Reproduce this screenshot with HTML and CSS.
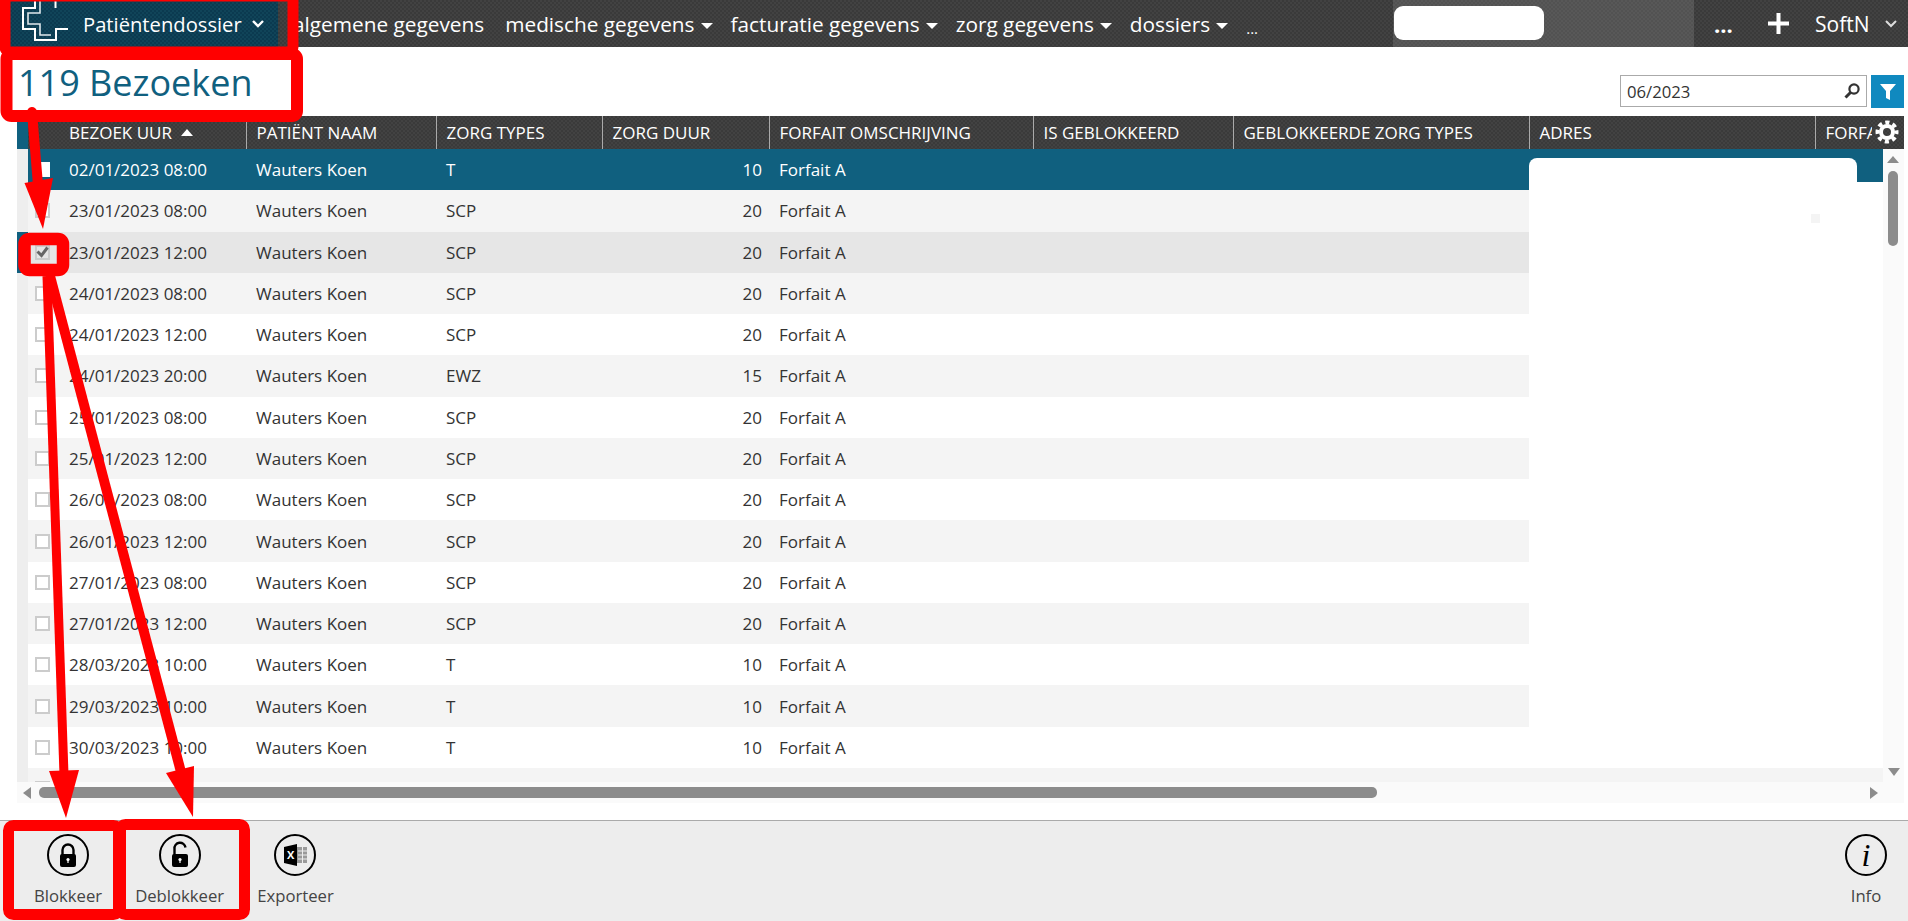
FILE: index.html
```html
<!DOCTYPE html>
<html lang="en">
<head>
    <meta charset="UTF-8">
    <title>119 Bezoeken</title>
    <link rel="stylesheet" href="styles.css">
</head>
<body>
    <header class="topbar">
        <div class="module">
            <svg class="logo" width="60" height="47" viewBox="0 0 60 47">
                <path d="M25 0v8H13v21h12v11h21V29h12" fill="none" stroke="#fff" stroke-width="2"/>
                <path d="M30 0v13H18v11h12v11h11" fill="none" stroke="#dfe8ec" stroke-width="1.6"/>
                <path d="M45.5 0v8" fill="none" stroke="#fff" stroke-width="2"/>
            </svg>
            <span class="module-name">Patiëntendossier</span>
            <svg class="chevron" width="12" height="8" viewBox="0 0 12 8"><path d="M1 1l5 5 5-5" fill="none" stroke="#fff" stroke-width="2.4"/></svg>
        </div>
        <nav class="menu">
            <a href="#" class="plain">algemene gegevens</a>
            <a href="#" class="drop">medische gegevens</a>
            <a href="#" class="drop">facturatie gegevens</a>
            <a href="#" class="drop">zorg gegevens</a>
            <a href="#" class="drop">dossiers</a>
            <a href="#" class="more">...</a>
        </nav>
        <div class="search-zone"><div class="search-box"></div></div>
        <div class="actions">
            <span class="dots">...</span>
            <svg width="21" height="21" viewBox="0 0 21 21"><path d="M10.5 0v21M0 10.5h21" stroke="#fff" stroke-width="4"/></svg>
            <span class="user">SoftN</span>
            <svg width="12" height="8" viewBox="0 0 12 8"><path d="M1 1l5 5 5-5" fill="none" stroke="#ddd" stroke-width="2"/></svg>
        </div>
    </header>

    <section class="title-row">
        <h1>119 Bezoeken</h1>
        <div class="filter">
            <div class="filter-input">
                <span>06/2023</span>
                <svg width="18" height="18" viewBox="0 0 18 18"><circle cx="11" cy="7" r="4.6" fill="none" stroke="#333" stroke-width="2.2"/><path d="M7.5 10.5L2.5 15.5" stroke="#333" stroke-width="3"/></svg>
            </div>
            <button class="filter-btn">
                <svg width="16" height="18" viewBox="0 0 16 18"><path d="M0 1h16L10 8v9l-4-2V8z" fill="#fff"/></svg>
            </button>
        </div>
    </section>

    <section class="grid">
        <table class="grid-head">
            <colgroup><col class="c-gutter"><col class="c-check"><col class="c-date"><col class="c-name"><col class="c-types"><col class="c-duur"><col class="c-forfait"><col class="c-blok"><col class="c-bloktypes"><col class="c-adres"><col class="c-last"></colgroup>
            <tr>
                <th class="gutter"></th>
                <th class="check-cell"></th>
                <th class="first">BEZOEK UUR <span class="sort"></span></th>
                <th>PATIËNT NAAM</th>
                <th>ZORG TYPES</th>
                <th>ZORG DUUR</th>
                <th>FORFAIT OMSCHRIJVING</th>
                <th>IS GEBLOKKEERD</th>
                <th>GEBLOKKEERDE ZORG TYPES</th>
                <th>ADRES</th>
                <th><span class="clip">FORFA</span></th>
            </tr>
        </table>
        <svg class="gear" width="24" height="24" viewBox="0 0 24 24">
            <circle cx="12" cy="12" r="9.5" fill="none" stroke="#fff" stroke-width="4" stroke-dasharray="4.1 3.36" stroke-dashoffset="2"/>
            <circle cx="12" cy="12" r="6" fill="none" stroke="#fff" stroke-width="4"/>
        </svg>
        <div class="grid-middle">
            <div class="grid-body">
                <table class="rows">
                    <colgroup><col class="c-gutter"><col class="c-check"><col class="c-date"><col class="c-name"><col class="c-types"><col class="c-duur"><col class="c-forfait"><col class="c-blok"><col class="c-bloktypes"><col class="c-adres"><col class="c-last2"></colgroup>
                    <tr class="current"><td class="gutter"></td><td class="check-cell"><span class="box"></span></td><td class="first">02/01/2023 08:00</td><td>Wauters Koen</td><td>T</td><td class="num">10</td><td>Forfait A</td><td></td><td></td><td></td><td></td></tr>
                    <tr class="alt"><td class="gutter"></td><td class="check-cell"><span class="box"></span></td><td class="first">23/01/2023 08:00</td><td>Wauters Koen</td><td>SCP</td><td class="num">20</td><td>Forfait A</td><td></td><td></td><td></td><td></td></tr>
                    <tr class="checked"><td class="gutter"></td><td class="check-cell"><span class="box"><svg width="15" height="15" viewBox="0 0 15 15"><path d="M2.5 6.5l4 4 6-8" fill="none" stroke="#666" stroke-width="3"/></svg></span></td><td class="first">23/01/2023 12:00</td><td>Wauters Koen</td><td>SCP</td><td class="num">20</td><td>Forfait A</td><td></td><td></td><td></td><td></td></tr>
                    <tr class="alt"><td class="gutter"></td><td class="check-cell"><span class="box"></span></td><td class="first">24/01/2023 08:00</td><td>Wauters Koen</td><td>SCP</td><td class="num">20</td><td>Forfait A</td><td></td><td></td><td></td><td></td></tr>
                    <tr><td class="gutter"></td><td class="check-cell"><span class="box"></span></td><td class="first">24/01/2023 12:00</td><td>Wauters Koen</td><td>SCP</td><td class="num">20</td><td>Forfait A</td><td></td><td></td><td></td><td></td></tr>
                    <tr class="alt"><td class="gutter"></td><td class="check-cell"><span class="box"></span></td><td class="first">24/01/2023 20:00</td><td>Wauters Koen</td><td>EWZ</td><td class="num">15</td><td>Forfait A</td><td></td><td></td><td></td><td></td></tr>
                    <tr><td class="gutter"></td><td class="check-cell"><span class="box"></span></td><td class="first">25/01/2023 08:00</td><td>Wauters Koen</td><td>SCP</td><td class="num">20</td><td>Forfait A</td><td></td><td></td><td></td><td></td></tr>
                    <tr class="alt"><td class="gutter"></td><td class="check-cell"><span class="box"></span></td><td class="first">25/01/2023 12:00</td><td>Wauters Koen</td><td>SCP</td><td class="num">20</td><td>Forfait A</td><td></td><td></td><td></td><td></td></tr>
                    <tr><td class="gutter"></td><td class="check-cell"><span class="box"></span></td><td class="first">26/01/2023 08:00</td><td>Wauters Koen</td><td>SCP</td><td class="num">20</td><td>Forfait A</td><td></td><td></td><td></td><td></td></tr>
                    <tr class="alt"><td class="gutter"></td><td class="check-cell"><span class="box"></span></td><td class="first">26/01/2023 12:00</td><td>Wauters Koen</td><td>SCP</td><td class="num">20</td><td>Forfait A</td><td></td><td></td><td></td><td></td></tr>
                    <tr><td class="gutter"></td><td class="check-cell"><span class="box"></span></td><td class="first">27/01/2023 08:00</td><td>Wauters Koen</td><td>SCP</td><td class="num">20</td><td>Forfait A</td><td></td><td></td><td></td><td></td></tr>
                    <tr class="alt"><td class="gutter"></td><td class="check-cell"><span class="box"></span></td><td class="first">27/01/2023 12:00</td><td>Wauters Koen</td><td>SCP</td><td class="num">20</td><td>Forfait A</td><td></td><td></td><td></td><td></td></tr>
                    <tr><td class="gutter"></td><td class="check-cell"><span class="box"></span></td><td class="first">28/03/2023 10:00</td><td>Wauters Koen</td><td>T</td><td class="num">10</td><td>Forfait A</td><td></td><td></td><td></td><td></td></tr>
                    <tr class="alt"><td class="gutter"></td><td class="check-cell"><span class="box"></span></td><td class="first">29/03/2023 10:00</td><td>Wauters Koen</td><td>T</td><td class="num">10</td><td>Forfait A</td><td></td><td></td><td></td><td></td></tr>
                    <tr><td class="gutter"></td><td class="check-cell"><span class="box"></span></td><td class="first">30/03/2023 10:00</td><td>Wauters Koen</td><td>T</td><td class="num">10</td><td>Forfait A</td><td></td><td></td><td></td><td></td></tr>
                    <tr class="alt"><td class="gutter"></td><td class="check-cell"><span class="box"></span></td><td class="first"></td><td></td><td></td><td class="num"></td><td></td><td></td><td></td><td></td><td></td></tr>
                </table>
                <!-- wit blok over de adres kolom -->
                <div class="mask-top"></div>
                <div class="mask-main"><i class="speck"></i></div>
            </div>
            <div class="vscroll">
                <span class="arrow up"></span>
                <span class="thumb-v"></span>
                <span class="arrow down"></span>
            </div>
        </div>
        <div class="hscroll">
            <span class="arrow left"></span>
            <span class="thumb-h"></span>
            <span class="arrow right"></span>
        </div>
    </section>

    <footer class="toolbar">
        <div class="tool">
            <svg width="42" height="42" viewBox="0 0 42 42">
                <circle cx="21" cy="21" r="20" fill="none" stroke="#000" stroke-width="2"/>
                <path d="M15.5 21v-5a5.5 5.5 0 0 1 11 0v5" fill="none" stroke="#000" stroke-width="2.4"/>
                <rect x="13" y="20" width="16" height="13" rx="2" fill="#000"/>
                <circle cx="21" cy="25.5" r="1.6" fill="#fff"/><rect x="20.4" y="26" width="1.2" height="3" fill="#fff"/>
            </svg>
            <span>Blokkeer</span>
        </div>
        <div class="tool">
            <svg width="42" height="42" viewBox="0 0 42 42">
                <circle cx="21" cy="21" r="20" fill="none" stroke="#000" stroke-width="2"/>
                <path d="M15.5 21v-6a5.5 5.5 0 0 1 11-1.5" fill="none" stroke="#000" stroke-width="2.4"/>
                <rect x="13" y="20" width="16" height="13" rx="2" fill="#000"/>
                <circle cx="21" cy="25.5" r="1.6" fill="#fff"/><rect x="20.4" y="26" width="1.2" height="3" fill="#fff"/>
            </svg>
            <span>Deblokkeer</span>
        </div>
        <div class="tool">
            <svg width="42" height="42" viewBox="0 0 42 42">
                <circle cx="21" cy="21" r="20" fill="none" stroke="#000" stroke-width="2"/>
                <path d="M23 13h10v16H23" fill="#9a9a9a"/>
                <path d="M24 17h9M24 21h9M24 25h9M28.5 13v16" stroke="#eee" stroke-width="1"/>
                <path d="M10 13l13-3v22l-13-3z" fill="#000"/>
                <text x="13" y="25" class="excel-x">X</text>
            </svg>
            <span>Exporteer</span>
        </div>
        <div class="tool tool-info">
            <svg width="42" height="42" viewBox="0 0 42 42">
                <circle cx="21" cy="21" r="20" fill="none" stroke="#000" stroke-width="2"/>
                <text x="21" y="32" text-anchor="middle" class="info-i">i</text>
            </svg>
            <span>Info</span>
        </div>
    </footer>

    <!-- rode annotaties over de pagina -->
    <svg class="marks" width="1908" height="921" viewBox="0 0 1908 921">
        <g fill="none" stroke="#f00">
            <rect x="5" y="-4" width="288" height="56" rx="5" stroke-width="11"/>
            <rect x="6.5" y="54" width="290.5" height="62" rx="5" stroke-width="12"/>
            <rect x="24.5" y="239" width="38.5" height="31" rx="5" stroke-width="12.5"/>
            <rect x="8.5" y="825.5" width="110" height="89" rx="5" stroke-width="11"/>
            <rect x="120.5" y="824.5" width="124" height="90" rx="5" stroke-width="11"/>
            <path d="M32 112L38 185" stroke-width="10" stroke-linecap="round"/>
            <path d="M47 276L64 775" stroke-width="9"/>
            <path d="M50 276L181 772" stroke-width="10"/>
        </g>
        <g fill="#f00">
            <path d="M24.5 183L53 178L43 229z"/>
            <path d="M49 771L79 770L66 818z"/>
            <path d="M166 773L194 766L193 817z"/>
        </g>
    </svg>
</body>
</html>
```

FILE: styles.css
```css
* {
    box-sizing: border-box;
}
html, body {
    margin: 0;
    height: 921px;
    overflow: hidden;
}
body {
    font-family: "Open Sans", "Liberation Sans", sans-serif;
    background-color: #fff;
    color: #333;
    position: relative;
}

/* top bar */
.topbar {
    display: flex;
    height: 47px;
    color: #fff;
    background: repeating-conic-gradient(#3a3a3a 0 25%, #424242 0 50%) 0 0 / 4px 4px;
}
.module {
    display: flex;
    align-items: center;
    width: 268px;
    margin-left: 10px;
    background: repeating-conic-gradient(#0b3a50 0 25%, #104459 0 50%) 0 0 / 4px 4px;
}
.logo {
    flex: none;
}
.module-name {
    font-size: 20.2px;
    margin-left: 13px;
}
.chevron {
    margin-left: 10px;
}
.menu {
    display: flex;
    align-items: center;
    gap: 18px;
    margin-left: 15px;
    width: 1100px;
}
.menu a {
    color: #fff;
    text-decoration: none;
    font-size: 20.8px;
    white-space: nowrap;
}
.menu .plain {
    margin-right: 3px;
}
.menu .drop::after {
    content: "";
    display: inline-block;
    margin-left: 6px;
    vertical-align: 3px;
    border-left: 6px solid transparent;
    border-right: 6px solid transparent;
    border-top: 6px solid #fff;
}
.menu .more {
    font-size: 15px;
    padding-top: 8px;
}
.search-zone {
    width: 301px;
    background: repeating-conic-gradient(#525252 0 25%, #585858 0 50%) 0 0 / 4px 4px;
    padding: 6px 0 0 1px;
}
.search-box {
    width: 150px;
    height: 34px;
    background-color: #fff;
    border-radius: 9px;
}
.actions {
    flex: 1;
    display: flex;
    align-items: center;
    padding-left: 20px;
}
.dots {
    font-size: 22px;
    font-weight: 700;
    width: 54px;
    line-height: 1;
}
.user {
    font-size: 21px;
    margin-left: 26px;
    margin-right: 15px;
}

/* title + filter */
.title-row {
    display: flex;
    justify-content: space-between;
    height: 69px;
    padding: 0 4px 0 18px;
}
h1 {
    margin: 13px 0 0;
    font-size: 36px;
    font-weight: 400;
    line-height: 46px;
    color: #10607f;
}
.filter {
    display: flex;
    gap: 4px;
    padding-top: 28px;
}
.filter-input {
    display: flex;
    justify-content: space-between;
    align-items: center;
    width: 247px;
    height: 32px;
    border: 1px solid #aaa;
    padding: 0 5px 0 6px;
    font-size: 16.7px;
}
.filter-btn {
    display: flex;
    align-items: center;
    justify-content: center;
    width: 33px;
    height: 33px;
    padding: 0;
    border: none;
    background-color: #1089bf;
}

/* grid */
.grid {
    position: relative;
    margin: 0 4px 0 17px;
}
.grid table {
    table-layout: fixed;
    border-collapse: collapse;
    border-spacing: 0;
}
.c-gutter { width: 11px; }
.c-check { width: 30px; }
.c-date { width: 188px; }
.c-name { width: 190px; }
.c-types { width: 166px; }
.c-duur { width: 167px; }
.c-forfait { width: 264px; }
.c-blok { width: 200px; }
.c-bloktypes { width: 296px; }
.c-adres { width: 286px; }
.c-last { width: 89px; }
.c-last2 { width: 68px; }
.grid-head {
    width: 1887px;
    height: 33px;
    color: #fff;
    background: repeating-conic-gradient(#3a3a3a 0 25%, #424242 0 50%) 0 0 / 4px 4px;
}
.grid-head th {
    padding: 0 0 0 10px;
    height: 33px;
    font-size: 17px;
    font-weight: 400;
    text-align: left;
    white-space: nowrap;
    overflow: hidden;
    border-right: 1px solid #aaa;
}
.grid-head th:last-child {
    border-right: none;
}
.grid-head th.gutter {
    background: #10607f;
    border-right: none;
    padding: 0;
}
.grid-head th.check-cell {
    border-right: none;
    padding: 0;
}
.grid-head th.first {
    padding-left: 11px;
}
.sort {
    display: inline-block;
    margin-left: 5px;
    vertical-align: 3px;
    border-left: 6px solid transparent;
    border-right: 6px solid transparent;
    border-bottom: 7px solid #fff;
}
.clip {
    display: block;
    width: 46px;
    overflow: hidden;
}
.gear {
    position: absolute;
    top: 4px;
    right: 5px;
}
.grid-middle {
    display: flex;
    height: 633px;
}
.grid-body {
    position: relative;
    width: 1866px;
    overflow: hidden;
}
.rows {
    width: 1866px;
}
.rows tr {
    height: 41.27px;
    background-color: #fff;
}
.rows tr.alt {
    background-color: #f4f4f4;
}
.rows tr.checked {
    background-color: #e6e6e6;
}
.rows tr.current {
    background-color: #10607f;
    color: #fff;
}
.rows td {
    padding: 0 0 0 10px;
    font-size: 17px;
    white-space: nowrap;
}
.rows td.first {
    padding-left: 11px;
}
.rows td.num {
    text-align: right;
    padding: 0 7px 0 0;
}
.rows td.gutter {
    padding: 0;
    background-color: #eee;
}
.rows tr.checked td.gutter {
    background-color: #10607f;
}
.rows td.check-cell {
    padding: 0 0 0 7px;
}
.box {
    display: block;
    width: 15px;
    height: 15px;
    background-color: #fff;
    border: 2px solid #ccc;
}
.box svg {
    display: block;
    margin: -2px;
}
.checked .box {
    background-color: #e6e6e6;
}
.current .box {
    border-color: #fff;
}
.mask-top {
    position: absolute;
    left: 1512px;
    top: 9px;
    width: 328px;
    height: 30px;
    background-color: #fff;
    border-radius: 8px 8px 0 0;
}
.mask-main {
    position: absolute;
    left: 1512px;
    top: 33px;
    width: 354px;
    height: 586px;
    background-color: #fff;
}
.speck {
    position: absolute;
    left: 282px;
    top: 32px;
    width: 9px;
    height: 9px;
    background-color: #f4f4f4;
}

/* scrollbars */
.vscroll {
    flex: 1;
    position: relative;
    background-color: #fafafa;
}
.hscroll {
    position: relative;
    height: 21px;
    background-color: #fafafa;
}
.thumb-v {
    position: absolute;
    left: 5px;
    top: 22px;
    width: 10px;
    height: 75px;
    border-radius: 5px;
    background-color: #8c8c8c;
}
.thumb-h {
    position: absolute;
    left: 22px;
    top: 5px;
    width: 1338px;
    height: 11px;
    border-radius: 5px;
    background-color: #8c8c8c;
}
.arrow {
    position: absolute;
    width: 0;
    height: 0;
}
.arrow.up {
    left: 4px;
    top: 7px;
    border-left: 6px solid transparent;
    border-right: 6px solid transparent;
    border-bottom: 7px solid #8c8c8c;
}
.arrow.down {
    left: 5px;
    bottom: 6px;
    border-left: 6px solid transparent;
    border-right: 6px solid transparent;
    border-top: 8px solid #8c8c8c;
}
.arrow.left {
    left: 6px;
    top: 5px;
    border-top: 6px solid transparent;
    border-bottom: 6px solid transparent;
    border-right: 8px solid #8c8c8c;
}
.arrow.right {
    right: 26px;
    top: 5px;
    border-top: 6px solid transparent;
    border-bottom: 6px solid transparent;
    border-left: 8px solid #8c8c8c;
}

/* bottom toolbar */
.toolbar {
    position: absolute;
    left: 0;
    right: 0;
    bottom: 0;
    display: flex;
    gap: 33px;
    height: 101px;
    padding: 13px 21px 0 34px;
    background-color: #ededed;
    border-top: 1px solid #aaa;
}
.tool {
    display: flex;
    flex-direction: column;
    align-items: center;
    gap: 9px;
    font-size: 16.7px;
    line-height: 22px;
    color: #444;
}
.tool-info {
    margin-left: auto;
}
.excel-x {
    font-family: "Open Sans", sans-serif;
    font-size: 11px;
    font-weight: 700;
    fill: #fff;
}
.info-i {
    font-family: "Liberation Serif", serif;
    font-style: italic;
    font-size: 32px;
    fill: #000;
}

.marks {
    position: absolute;
    top: 0;
    left: 0;
    pointer-events: none;
}
```
